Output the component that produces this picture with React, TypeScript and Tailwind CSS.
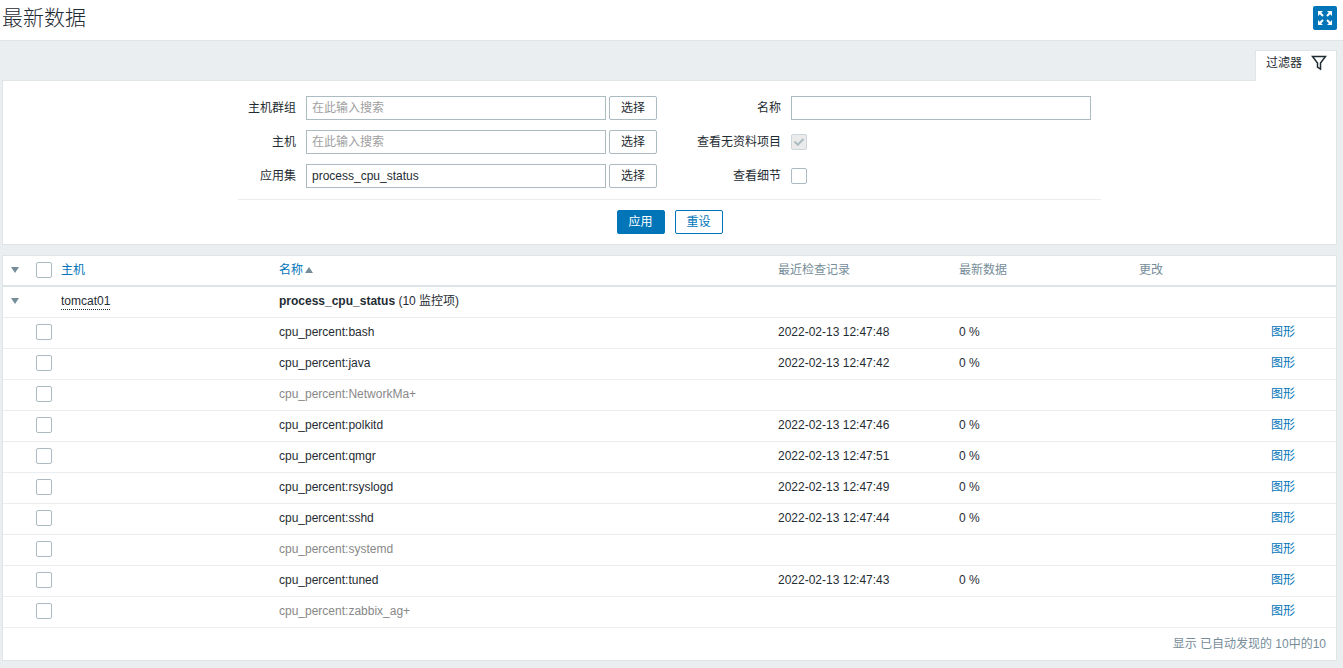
import React from 'react';
import clsx from 'clsx';

type Item = {
  name: string;
  lastCheck?: string;
  value?: string;
};

const items: Item[] = [
  { name: 'cpu_percent:bash', lastCheck: '2022-02-13 12:47:48', value: '0 %' },
  { name: 'cpu_percent:java', lastCheck: '2022-02-13 12:47:42', value: '0 %' },
  { name: 'cpu_percent:NetworkMa+' },
  { name: 'cpu_percent:polkitd', lastCheck: '2022-02-13 12:47:46', value: '0 %' },
  { name: 'cpu_percent:qmgr', lastCheck: '2022-02-13 12:47:51', value: '0 %' },
  { name: 'cpu_percent:rsyslogd', lastCheck: '2022-02-13 12:47:49', value: '0 %' },
  { name: 'cpu_percent:sshd', lastCheck: '2022-02-13 12:47:44', value: '0 %' },
  { name: 'cpu_percent:systemd' },
  { name: 'cpu_percent:tuned', lastCheck: '2022-02-13 12:47:43', value: '0 %' },
  { name: 'cpu_percent:zabbix_ag+' },
];

const inputClass =
  'block h-6 w-[300px] border border-[#acbbc2] bg-white px-[5px] text-[#1f2c33] outline-none placeholder:text-[#a0a0a0] focus:border-[#0275b8]';

function Checkbox(props: React.InputHTMLAttributes<HTMLInputElement>) {
  return (
    <span className="grid size-4">
      <input
        type="checkbox"
        className="peer col-start-1 row-start-1 size-4 appearance-none rounded-xs border border-[#acbbc2] bg-white disabled:border-[#ccd5d9] disabled:bg-[#ebebeb]"
        {...props}
      />
      <svg
        viewBox="0 0 16 16"
        className="pointer-events-none invisible col-start-1 row-start-1 size-4 fill-none stroke-[#1f2c33] peer-checked:visible peer-disabled:stroke-[#acbbc2]"
      >
        <path d="M3.5 7.5 6.8 10.8 12.5 5" strokeWidth="2" />
      </svg>
    </span>
  );
}

function SelectField({ id, label, value }: { id: string; label: string; value?: string }) {
  return (
    <>
      <label htmlFor={id} className="text-right">{label}</label>
      <div className="flex gap-[3px]">
        <input id={id} type="text" className={inputClass} placeholder="在此输入搜索" defaultValue={value} />
        <button type="button" className="h-6 w-12 rounded-xs border border-[#acbbc2] bg-white">选择</button>
      </div>
    </>
  );
}

function Arrow({ up = false }: { up?: boolean }) {
  return (
    <svg viewBox="0 0 8 6" className="inline-block h-[6px] w-2 fill-[#768d99]">
      <path d={up ? 'M0 6 4 0 8 6Z' : 'M0 0h8L4 6Z'} />
    </svg>
  );
}

function ToggleButton({ label }: { label: string }) {
  return (
    <button type="button" aria-label={label} className="flex h-4 w-5 items-center justify-center">
      <Arrow />
    </button>
  );
}

function Filter() {
  return (
    <form className="border border-[#dfe4e7] bg-white pt-[15px] pb-[10px]" onSubmit={(e) => e.preventDefault()}>
      <div className="mx-auto w-fit">
        <div className="flex gap-10 border-b border-[#ebeef0] px-[10px] pb-[11px]">
          <div className="grid auto-rows-[24px] grid-cols-[auto_auto] items-center gap-[10px]">
            <SelectField id="groups" label="主机群组" />
            <SelectField id="hosts" label="主机" />
            <SelectField id="application" label="应用集" value="process_cpu_status" />
          </div>
          <div className="grid auto-rows-[24px] grid-cols-[auto_auto] items-center gap-[10px]">
            <label htmlFor="name" className="text-right">名称</label>
            <input id="name" type="text" className={inputClass} />
            <label htmlFor="without-data" className="text-right">查看无资料项目</label>
            <Checkbox id="without-data" defaultChecked disabled />
            <label htmlFor="details" className="text-right">查看细节</label>
            <Checkbox id="details" />
          </div>
        </div>
        <div className="flex justify-center gap-[10px] pt-[10px]">
          <button type="submit" className="h-6 w-12 rounded-xs border border-[#0275b8] bg-[#0275b8] text-white">应用</button>
          <button type="reset" className="h-6 w-12 rounded-xs border border-[#0275b8] bg-white text-[#0275b8]">重设</button>
        </div>
      </div>
    </form>
  );
}

function LatestData() {
  return (
    <div className="mt-[10px] border border-[#dfe4e7] bg-white">
      <table className="w-full table-fixed border-separate border-spacing-0 text-left [&_td]:h-[31px] [&_td]:border-b [&_td]:border-[#ebeef0] [&_td]:px-[5px] [&_td]:pt-0 [&_td]:pb-[2px] [&_th]:h-[31px] [&_th]:border-b-2 [&_th]:border-[#dfe4e7] [&_th]:px-[5px] [&_th]:pt-0 [&_th]:pb-[2px] [&_th]:font-normal [&_th]:text-[#768d99]">
        <colgroup>
          <col className="w-7" />
          <col className="w-[25px]" />
          <col className="w-[218px]" />
          <col />
          <col className="w-[181px]" />
          <col className="w-[180px]" />
          <col className="w-[132px]" />
          <col className="w-[70px]" />
        </colgroup>
        <thead>
          <tr>
            <th className="!px-[2px]"><ToggleButton label="全部展开" /></th>
            <th><Checkbox aria-label="全选" /></th>
            <th><a href="#host" className="text-[#0275b8]">主机</a></th>
            <th>
              <a href="#name" className="flex items-center gap-[2px] text-[#0275b8]">
                名称<Arrow up />
              </a>
            </th>
            <th>最近检查记录</th>
            <th>最新数据</th>
            <th>更改</th>
            <th />
          </tr>
        </thead>
        <tbody>
          <tr>
            <td className="!px-[2px]"><ToggleButton label="展开" /></td>
            <td />
            <td><a href="#tomcat01" className="inline-block border-b border-dotted border-[#1f2c33] leading-[15px]">tomcat01</a></td>
            <td colSpan={5}><b>process_cpu_status</b> (10 监控项)</td>
          </tr>
          {items.map((item) => (
            <tr key={item.name}>
              <td />
              <td><Checkbox aria-label={item.name} /></td>
              <td />
              <td className={clsx(!item.lastCheck && 'text-[#888]')}>{item.name}</td>
              <td>{item.lastCheck}</td>
              <td>{item.value}</td>
              <td />
              <td><a href="#graph" className="text-[#0275b8]">图形</a></td>
            </tr>
          ))}
        </tbody>
      </table>
      <div className="flex h-8 items-center justify-end px-[10px] text-[#768d99]">显示 已自动发现的 10中的10</div>
    </div>
  );
}

export default function App() {
  return (
    <div className="min-h-screen bg-[#ebeef0] font-['Liberation_Sans','Noto_Sans_CJK_SC',sans-serif] text-xs text-[#1f2c33]">
      <header className="flex h-[41px] items-center justify-between border-b border-[#dfe4e7] bg-white pr-[6px] pb-1 pl-[2px]">
        <h1 className="text-[21px] leading-6 font-light">最新数据</h1>
        <button type="button" aria-label="全屏" className="flex size-6 items-center justify-center rounded-xs bg-[#0275b8]">
          <svg viewBox="0 0 14 14" className="size-[14px] fill-white stroke-white">
            <path d="M0 0h5L0 5ZM14 0v5L9 0ZM0 14V9l5 5ZM14 14H9l5-5Z" stroke="none" />
            <path d="M2 2l3 3M12 2 9 5M2 12l3-3M12 12 9 9" strokeWidth="2" />
          </svg>
        </button>
      </header>

      <main className="pt-[9px] pr-[6px] pl-[2px]">
        <div className="flex justify-end">
          {/* tab overlaps the top border of the filter panel */}
          <a href="#filter" className="relative -mb-px flex h-[31px] items-center gap-[9px] border border-b-0 border-[#dfe4e7] bg-white pr-[9px] pb-[6px] pl-[10px]">
            过滤器
            <svg viewBox="0 0 16 16" className="size-4 fill-none stroke-[#1f2c33]">
              <path d="M1.500 1.500h13L9.500 8v6l-3-2V8Z" strokeWidth="1.500" />
            </svg>
          </a>
        </div>
        <Filter />
        <LatestData />
      </main>
    </div>
  );
}
